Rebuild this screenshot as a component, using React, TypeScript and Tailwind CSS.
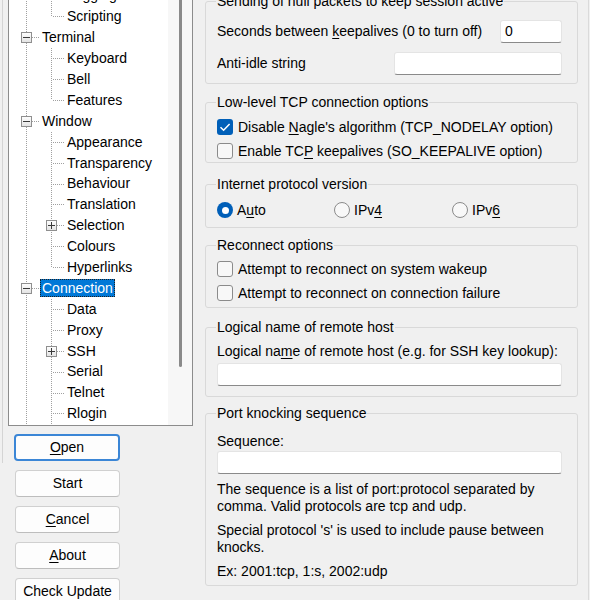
import React from "react";

type Row = { label: string; level: 1 | 2; box?: "minus" | "plus"; selected?: boolean };

const ROWS: Row[] = [
  { label: "Logging", level: 2 },
  { label: "Scripting", level: 2 },
  { label: "Terminal", level: 1, box: "minus" },
  { label: "Keyboard", level: 2 },
  { label: "Bell", level: 2 },
  { label: "Features", level: 2 },
  { label: "Window", level: 1, box: "minus" },
  { label: "Appearance", level: 2 },
  { label: "Transparency", level: 2 },
  { label: "Behaviour", level: 2 },
  { label: "Translation", level: 2 },
  { label: "Selection", level: 2, box: "plus" },
  { label: "Colours", level: 2 },
  { label: "Hyperlinks", level: 2 },
  { label: "Connection", level: 1, box: "minus", selected: true },
  { label: "Data", level: 2 },
  { label: "Proxy", level: 2 },
  { label: "SSH", level: 2, box: "plus" },
  { label: "Serial", level: 2 },
  { label: "Telnet", level: 2 },
  { label: "Rlogin", level: 2 },
];

const RH = 20.9;
const H = 445;
const cy = (i: number) => Math.round(10.45 + RH * i);

function Dots({ x1, y1, x2, y2 }: { x1: number; y1: number; x2: number; y2: number }) {
  return (
    <line
      x1={x1}
      y1={y1}
      x2={x2}
      y2={y2}
      stroke="#a0a0a0"
      strokeWidth={1}
      strokeDasharray="1 1"
      shapeRendering="crispEdges"
    />
  );
}

function ExpBox({ cx, y, plus }: { cx: number; y: number; plus: boolean }) {
  return (
    <g shapeRendering="crispEdges">
      <rect x={cx - 4.5} y={y - 4.5} width={10} height={10} fill="url(#boxg)" stroke="#8f8f8f" />
      <line x1={cx - 3} y1={y + 0.5} x2={cx + 4} y2={y + 0.5} stroke="#3a3a3a" />
      {plus && <line x1={cx + 0.5} y1={y - 3} x2={cx + 0.5} y2={y + 4} stroke="#3a3a3a" />}
    </g>
  );
}

function TreeLines() {
  const items: React.ReactNode[] = [];
  items.push(<Dots key="rv" x1={17.5} y1={0} x2={17.5} y2={H} />);
  const segs: [number, number][] = [
    [0, cy(1)],
    [cy(3) - 10, cy(5)],
    [cy(7) - 10, cy(13)],
    [cy(15) - 10, H],
  ];
  segs.forEach(([a, b], k) => items.push(<Dots key={"v" + k} x1={42.5} y1={a} x2={42.5} y2={b} />));
  ROWS.forEach((r, i) => {
    const y = cy(i) + 0.5;
    if (r.level === 1) {
      items.push(<Dots key={"h" + i} x1={23} y1={y} x2={31} y2={y} />);
    } else {
      items.push(<Dots key={"h" + i} x1={r.box ? 48 : 44} y1={y} x2={55} y2={y} />);
    }
  });
  ROWS.forEach((r, i) => {
    if (!r.box) return;
    const cx = r.level === 1 ? 17 : 42;
    items.push(<ExpBox key={"b" + i} cx={cx} y={cy(i)} plus={r.box === "plus"} />);
  });
  return (
    <svg className="pointer-events-none absolute left-0 top-0" width={159} height={H}>
      <defs>
        <linearGradient id="boxg" x1="0" y1="0" x2="0" y2="1">
          <stop offset="0" stopColor="#ffffff" />
          <stop offset="1" stopColor="#e2e2e2" />
        </linearGradient>
      </defs>
      {items}
    </svg>
  );
}

function Tree() {
  return (
    <div className="flex h-[426px] w-[185px] shrink-0 overflow-hidden border-x border-b border-[#8c8c8c] bg-white">
      <div className="relative w-[159px] shrink-0 overflow-hidden">
        <div className="relative mt-[-15px] h-[445px]">
          <TreeLines />
          {ROWS.map((r) => (
            <div
              key={r.label}
              className={
                "flex h-[20.9px] items-center whitespace-nowrap " + (r.level === 1 ? "pl-[31px]" : "pl-[56px]")
              }
            >
              {r.selected ? (
                <span className="h-[18px] bg-[#0078d7] px-[2px] leading-[18px] text-white outline-1 outline-dotted outline-[#202020] -outline-offset-1">
                  {r.label}
                </span>
              ) : (
                <span className="px-[2px] leading-[18px]">{r.label}</span>
              )}
            </div>
          ))}
        </div>
      </div>
      <div className="w-[24px] shrink-0 bg-[#f7f7f7]">
        <div className="ml-[11px] h-[367px] w-[3px] rounded-b-full bg-[#8a8a8a]" />
      </div>
    </div>
  );
}

function U({ children }: { children: React.ReactNode }) {
  return <span className="underline decoration-1 underline-offset-2">{children}</span>;
}

function Btn({ children, primary }: { children: React.ReactNode; primary?: boolean }) {
  return (
    <button
      className={
        primary
          ? "ml-[6px] h-[27px] w-[106px] rounded-[4px] border-2 border-[#3b86d6] bg-[#fdfdfd] text-center leading-[17px]"
          : "ml-[7px] h-[27px] w-[105px] rounded-[4px] border border-[#d0d0d0] border-b-[#bdbdbd] bg-[#fdfdfd] text-center leading-[17px]"
      }
    >
      {children}
    </button>
  );
}

function Group({
  title,
  className,
  children,
}: {
  title: string;
  className: string;
  children: React.ReactNode;
}) {
  return (
    <div className={"relative shrink-0 rounded-[3px] border border-[#d9d9d9] pl-[11px] pr-[15px] " + className}>
      <span className="absolute left-[10px] top-[-9px] whitespace-nowrap bg-[#f0f0f0] px-[1px] leading-[17px]">
        {title}
      </span>
      {children}
    </div>
  );
}

function Check({ checked, children }: { checked?: boolean; children: React.ReactNode }) {
  return (
    <div className="flex h-[20px] items-center">
      {checked ? (
        <span className="flex h-[16px] w-[16px] shrink-0 items-center justify-center rounded-[3px] bg-[#005fb8]">
          <svg width="16" height="16" viewBox="0 0 16 16">
            <polyline points="3.5,8.2 6.6,11.2 12.6,5" fill="none" stroke="#fff" strokeWidth="1.5" />
          </svg>
        </span>
      ) : (
        <span className="h-[16px] w-[16px] shrink-0 rounded-[3px] border border-[#8b8b8b] bg-[#f8f8f8]" />
      )}
      <span className="ml-[5px] whitespace-nowrap">{children}</span>
    </div>
  );
}

function Radio({ checked, children, className }: { checked?: boolean; children: React.ReactNode; className: string }) {
  return (
    <div className={"flex h-[20px] items-center " + className}>
      {checked ? (
        <span className="flex h-[16px] w-[16px] shrink-0 items-center justify-center rounded-full bg-[#005fb8]">
          <span className="h-[7px] w-[7px] rounded-full bg-white" />
        </span>
      ) : (
        <span className="h-[16px] w-[16px] shrink-0 rounded-full border border-[#8b8b8b] bg-[#f8f8f8]" />
      )}
      <span className="ml-[4px] whitespace-nowrap">{children}</span>
    </div>
  );
}

function Input({ className, value }: { className: string; value?: string }) {
  return (
    <div
      className={
        "flex h-[23px] shrink-0 items-center rounded-[3px] border border-[#e4e4e4] border-b-[#8a8a8a] bg-white px-[4px] " +
        className
      }
    >
      {value}
    </div>
  );
}

export default function App() {
  return (
    <div className="flex h-[600px] w-[590px] overflow-hidden bg-[#f0f0f0] font-['Liberation_Sans',Arial,sans-serif] text-[14px] leading-[17px] text-black">
      <div className="flex w-[205px] shrink-0">
        <div className="ml-[2px] h-[463px] w-[1px] shrink-0 bg-[#d4d4d4]" />
        <div className="ml-[5px] flex flex-col">
          <Tree />
          <div className="mt-[8px] flex flex-col gap-[9px]">
            <Btn primary>
              <U>O</U>pen
            </Btn>
            <Btn>Start</Btn>
            <Btn>
              <U>C</U>ancel
            </Btn>
            <Btn>
              <U>A</U>bout
            </Btn>
            <Btn>Check Update</Btn>
          </div>
        </div>
      </div>

      <div className="flex w-[373px] shrink-0 flex-col">
        <Group title="Sending of null packets to keep session active" className="mt-[1px] h-[83px] pt-[18px]">
          <div className="flex h-[23px] items-center justify-between">
            <span className="whitespace-nowrap">
              Seconds between <U>k</U>eepalives (0 to turn off)
            </span>
            <Input className="w-[62px]" value="0" />
          </div>
          <div className="mt-[9px] flex h-[23px] items-center justify-between">
            <span>Anti-idle string</span>
            <Input className="w-[168px]" />
          </div>
        </Group>

        <Group title="Low-level TCP connection options" className="mt-[18px] h-[61px] pt-[14px]">
          <div className="flex flex-col gap-[4px]">
            <Check checked>
              Disable <U>N</U>agle's algorithm (TCP_NODELAY option)
            </Check>
            <Check>
              Enable TC<U>P</U> keepalives (SO_KEEPALIVE option)
            </Check>
          </div>
        </Group>

        <Group title="Internet protocol version" className="mt-[21px] h-[44px] pt-[15px]">
          <div className="flex">
            <Radio checked className="w-[117px]">
              A<U>u</U>to
            </Radio>
            <Radio className="w-[118px]">
              IPv<U>4</U>
            </Radio>
            <Radio className="w-[110px]">
              IPv<U>6</U>
            </Radio>
          </div>
        </Group>

        <Group title="Reconnect options" className="mt-[17px] h-[63px] pt-[13px]">
          <div className="flex flex-col gap-[4px]">
            <Check>Attempt to reconnect on system wakeup</Check>
            <Check>Attempt to reconnect on connection failure</Check>
          </div>
        </Group>

        <Group title="Logical name of remote host" className="mt-[19px] h-[70px] pt-[15px]">
          <div className="whitespace-nowrap">
            Logical na<U>m</U>e of remote host (e.g. for SSH key lookup):
          </div>
          <Input className="mt-[3px] w-full" />
        </Group>

        <Group title="Port knocking sequence" className="mt-[16px] h-[173px] pt-[19px]">
          <div>Sequence:</div>
          <Input className="mt-[1px] w-full" />
          <p className="mt-[7px]">
            The sequence is a list of port:protocol separated by
            <br />
            comma. Valid protocols are tcp and udp.
          </p>
          <p className="mt-[7px]">
            Special protocol 's' is used to include pause between
            <br />
            knocks.
          </p>
          <p className="mt-[7px]">Ex: 2001:tcp, 1:s, 2002:udp</p>
        </Group>
      </div>

      <div className="ml-[10px] h-full w-[1px] shrink-0 bg-[#dadada]" />
    </div>
  );
}
